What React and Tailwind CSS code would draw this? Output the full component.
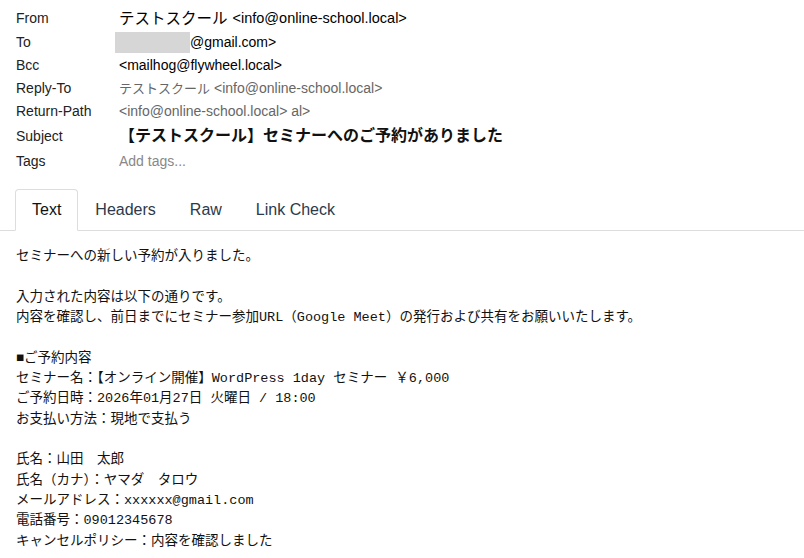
import React from "react";

const sans = { fontFamily: '"Liberation Sans", "Noto Sans CJK JP", sans-serif' };

function Row({ label, h, children }) {
  return (
    <div className={`flex items-center ${h}`}>
      <div className="w-[103px] shrink-0 text-[14px] text-[#222]">{label}</div>
      <div className="flex items-center min-w-0">{children}</div>
    </div>
  );
}

export default function App() {
  const body = [
    "セミナーへの新しい予約が入りました。",
    "",
    "入力された内容は以下の通りです。",
    "内容を確認し、前日までにセミナー参加URL（Google Meet）の発行および共有をお願いいたします。",
    "",
    "■ご予約内容",
    "セミナー名：【オンライン開催】WordPress 1day セミナー ￥6,000",
    "ご予約日時：2026年01月27日 火曜日 / 18:00",
    "お支払い方法：現地で支払う",
    "",
    "氏名：山田　太郎",
    "氏名（カナ）：ヤマダ　タロウ",
    "メールアドレス：xxxxxx@gmail.com",
    "電話番号：09012345678",
    "キャンセルポリシー：内容を確認しました",
  ];
  return (
    <div className="w-[804px] h-[558px] overflow-hidden bg-white" style={sans}>
      <div className="pl-4 pt-[6px]">
        <Row label="From" h="h-[25px]">
          <span className="text-[15.5px] text-black">テストスクール</span>
          <span className="text-[14.5px] text-black ml-[5px]">&lt;info@online-school.local&gt;</span>
        </Row>
        <Row label="To" h="h-[23px]">
          <span className="inline-block w-[75px] h-[21px] bg-[#d6d6d6] -ml-[4px]"></span>
          <span className="text-[14px] text-black">@gmail.com&gt;</span>
        </Row>
        <Row label="Bcc" h="h-[23px]">
          <span className="text-[14px] text-black">&lt;mailhog@flywheel.local&gt;</span>
        </Row>
        <Row label="Reply-To" h="h-[23px]">
          <span className="text-[13px] text-[#666]">テストスクール</span>
          <span className="text-[14px] text-[#666] ml-[4px]">&lt;info@online-school.local&gt;</span>
        </Row>
        <Row label="Return-Path" h="h-[23px]">
          <span className="text-[14px] text-[#666]">&lt;info@online-school.local&gt; al&gt;</span>
        </Row>
        <Row label="Subject" h="h-[26px]">
          <span className="text-[16px] font-bold text-[#111]">【テストスクール】セミナーへのご予約がありました</span>
        </Row>
        <Row label="Tags" h="h-[24px]">
          <span className="text-[14px] text-[#888]">Add tags...</span>
        </Row>
      </div>

      <div className="mt-[16px] flex border-b border-[#dddddd] pl-[15px]">
        <div className="-mb-px h-[42px] px-[16px] flex items-center border border-[#dddddd] border-b-white rounded-t-[4px] bg-white text-[16px] text-[#111]">
          Text
        </div>
        <div className="-mb-px h-[42px] px-[16px] flex items-center border border-transparent text-[16px] text-[#2c3a4b]">
          Headers
        </div>
        <div className="-mb-px h-[42px] px-[16px] flex items-center border border-transparent text-[16px] text-[#2c3a4b]">
          Raw
        </div>
        <div className="-mb-px h-[42px] px-[16px] flex items-center border border-transparent text-[16px] text-[#2c3a4b]">
          Link Check
        </div>
      </div>

      <div
        className="pl-4 pt-[16px] text-[13.5px] leading-[20.35px] text-[#111] whitespace-pre"
        style={{ fontFamily: '"Liberation Mono", "Noto Sans CJK JP", monospace' }}
      >
        {body.map((l, i) => (
          <div key={i} className="h-[20.35px]">{l}</div>
        ))}
      </div>
    </div>
  );
}
